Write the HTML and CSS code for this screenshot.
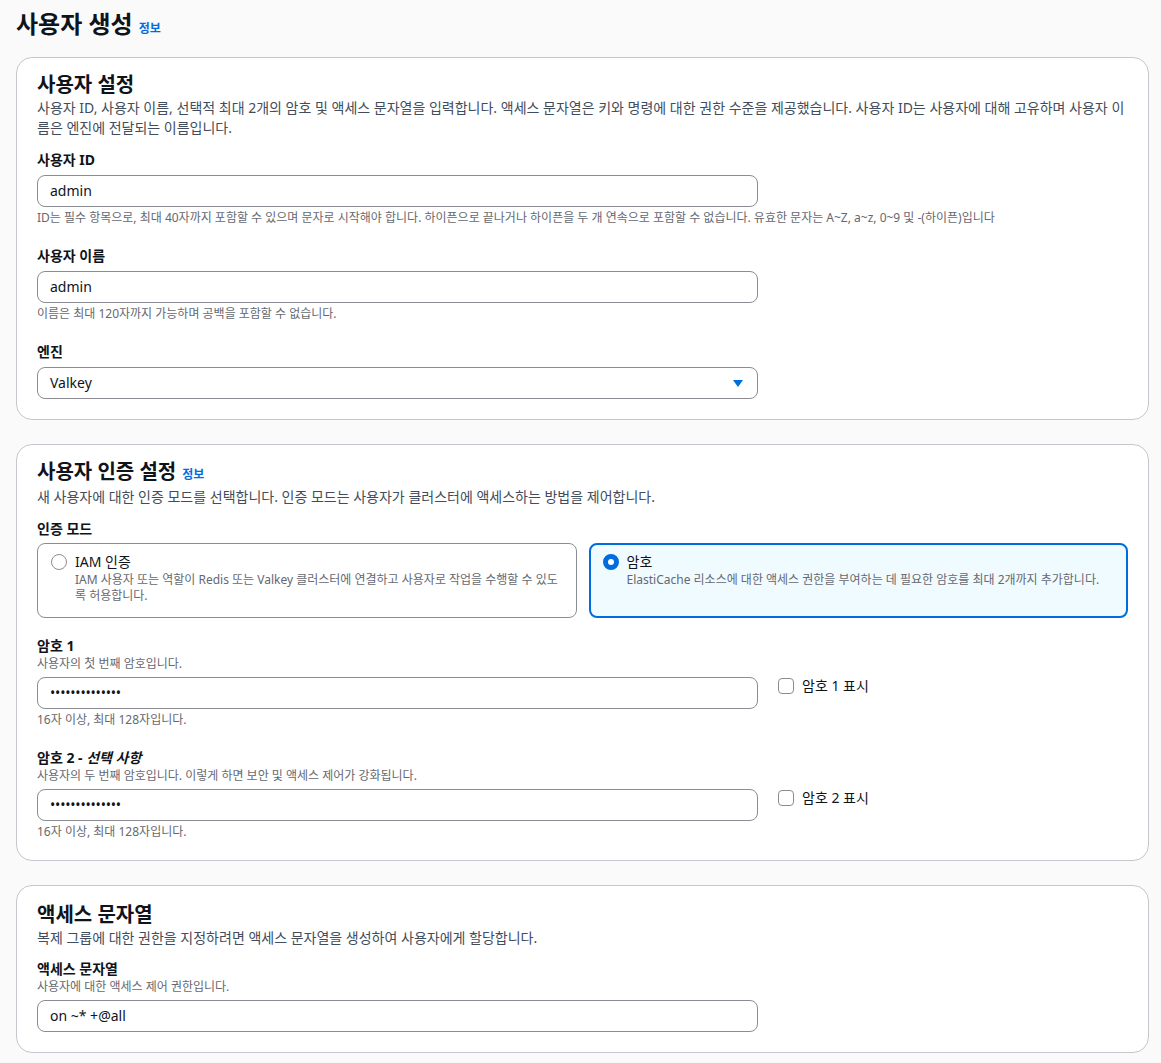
FILE: index.html
```html
<!DOCTYPE html>
<html lang="ko">
<head>
<meta charset="utf-8">
<title>사용자 생성</title>
<link rel="stylesheet" href="styles.css">
</head>
<body>
<div class="page">
  <div class="page-header">
    <h1 class="page-title">사용자 생성</h1>
    <a class="info" href="#">정보</a>
  </div>

  <section class="card">
    <h2 class="card-title">사용자 설정</h2>
    <p class="card-desc">사용자 ID, 사용자 이름, 선택적 최대 2개의 암호 및 액세스 문자열을 입력합니다. 액세스 문자열은 키와 명령에 대한 권한 수준을 제공했습니다. 사용자 ID는 사용자에 대해 고유하며 사용자 이름은 엔진에 전달되는 이름입니다.</p>

    <div class="field first">
      <div class="label">사용자 ID</div>
      <div class="input">admin</div>
      <div class="constraint">ID는 필수 항목으로, 최대 40자까지 포함할 수 있으며 문자로 시작해야 합니다. 하이픈으로 끝나거나 하이픈을 두 개 연속으로 포함할 수 없습니다. 유효한 문자는 A~Z, a~z, 0~9 및 -(하이픈)입니다</div>
    </div>

    <div class="field">
      <div class="label">사용자 이름</div>
      <div class="input">admin</div>
      <div class="constraint">이름은 최대 120자까지 가능하며 공백을 포함할 수 없습니다.</div>
    </div>

    <div class="field">
      <div class="label">엔진</div>
      <div class="input select">
        <span>Valkey</span>
        <svg class="caret" width="10" height="7" viewBox="0 0 10 7"><path d="M0 0 H10 L5 7 Z" fill="#006ce0"/></svg>
      </div>
    </div>
  </section>

  <section class="card card-auth">
    <div class="title-row">
      <h2 class="card-title">사용자 인증 설정</h2>
      <a class="info" href="#">정보</a>
    </div>
    <p class="card-desc">새 사용자에 대한 인증 모드를 선택합니다. 인증 모드는 사용자가 클러스터에 액세스하는 방법을 제어합니다.</p>

    <div class="field first">
      <div class="label">인증 모드</div>
      <div class="tiles">
        <div class="tile">
          <span class="radio"></span>
          <div class="tile-body">
            <div class="tile-label">IAM 인증</div>
            <div class="tile-desc">IAM 사용자 또는 역할이 Redis 또는 Valkey 클러스터에 연결하고 사용자로 작업을 수행할 수 있도록 허용합니다.</div>
          </div>
        </div>
        <div class="tile selected">
          <span class="radio checked"></span>
          <div class="tile-body">
            <div class="tile-label">암호</div>
            <div class="tile-desc">ElastiCache 리소스에 대한 액세스 권한을 부여하는 데 필요한 암호를 최대 2개까지 추가합니다.</div>
          </div>
        </div>
      </div>
    </div>

    <div class="field after-tiles">
      <div class="label">암호 1</div>
      <div class="desc">사용자의 첫 번째 암호입니다.</div>
      <div class="input-row">
        <div class="input password">••••••••••••••</div>
        <label class="check"><span class="box"></span>암호 1 표시</label>
      </div>
      <div class="constraint">16자 이상, 최대 128자입니다.</div>
    </div>

    <div class="field">
      <div class="label">암호 2 - <i>선택 사항</i></div>
      <div class="desc">사용자의 두 번째 암호입니다. 이렇게 하면 보안 및 액세스 제어가 강화됩니다.</div>
      <div class="input-row">
        <div class="input password">••••••••••••••</div>
        <label class="check"><span class="box"></span>암호 2 표시</label>
      </div>
      <div class="constraint">16자 이상, 최대 128자입니다.</div>
    </div>
  </section>

  <section class="card card-last">
    <h2 class="card-title">액세스 문자열</h2>
    <p class="card-desc">복제 그룹에 대한 권한을 지정하려면 액세스 문자열을 생성하여 사용자에게 할당합니다.</p>
    <div class="field first">
      <div class="label">액세스 문자열</div>
      <div class="desc">사용자에 대한 액세스 제어 권한입니다.</div>
      <div class="input">on ~* +@all</div>
    </div>
  </section>
</div>
</body>
</html>
```

FILE: styles.css
```css
* { box-sizing: border-box; }

body {
  margin: 0;
  background: #fafafa;
  color: #0f141a;
  font-family: "Noto Sans", "Noto Sans CJK KR", sans-serif;
  font-size: 14px;
  line-height: 20px;
}

.page {
  width: 1149px;
  padding: 9px 0 10px 16px;
}

.page-header {
  display: flex;
  align-items: baseline;
  gap: 6px;
  height: 48px;
}

.page-title {
  margin: 0;
  font-size: 24px;
  line-height: 30px;
  font-weight: 700;
}

.info {
  color: #006ce0;
  font-size: 12px;
  font-weight: 700;
  text-decoration: none;
}

.card {
  background: #fff;
  border: 1px solid #c6c6cd;
  border-radius: 16px;
  padding: 13px 20px 20px;
  margin-bottom: 24px;
}

.title-row {
  display: flex;
  align-items: baseline;
  gap: 6px;
  margin-top: 2px;
}

.card-title {
  margin: 0;
  font-size: 20px;
  line-height: 24px;
  font-weight: 700;
}

.card > .card-title {
  margin-top: 2px;
}

.card-desc {
  margin: 1px 0 0;
  color: #414d5c;
}

.card-auth .card-desc { margin-top: 2px; }

.card-last { padding-top: 14px; }
.card-last > .card-title { margin-top: 3px; }
.card-last .field.first { margin-top: 11px; }

.field { margin-top: 20px; }
.field.first { margin-top: 12px; }
.field.after-tiles { margin-top: 18px; }

.label {
  font-weight: 700;
  line-height: 20px;
}

.label i { font-weight: 700; }

.desc {
  font-size: 12px;
  line-height: 16px;
  color: #656871;
}

.input {
  margin-top: 5px;
  width: 721px;
  height: 32px;
  border: 1px solid #8c8c94;
  border-radius: 8px;
  padding: 0 12px;
  display: flex;
  align-items: center;
  background: #fff;
}

.select {
  justify-content: space-between;
  padding-right: 14px;
}

.password {
  font-size: 14px;
  letter-spacing: -0.2px;
}

.constraint {
  margin-top: 3px;
  font-size: 12px;
  line-height: 16px;
  color: #656871;
}

.input-row {
  display: flex;
  align-items: flex-start;
  gap: 20px;
}

.check {
  margin-top: 4px;
  display: flex;
  align-items: center;
  gap: 8px;
  height: 20px;
}

.box {
  width: 16px;
  height: 16px;
  border: 1px solid #8c8c94;
  border-radius: 4px;
  background: #fff;
}

.tiles {
  margin-top: 4px;
  display: grid;
  grid-template-columns: 1fr 1fr;
  gap: 12px;
}

.tile {
  display: flex;
  align-items: flex-start;
  gap: 8px;
  border: 1px solid #8c8c94;
  border-radius: 8px;
  padding: 8px 14px 13px 13px;
  min-height: 74px;
}

.tile.selected {
  border: 2px solid #006ce0;
  background: #f0fbff;
  padding: 7px 13px 12px 12px;
}

.radio {
  flex: none;
  width: 16px;
  height: 16px;
  margin-top: 2px;
  border: 1px solid #8c8c94;
  border-radius: 50%;
  background: #fff;
}

.radio.checked {
  border: 5px solid #006ce0;
}

.tile-label { line-height: 20px; }

.tile-desc {
  font-size: 12px;
  line-height: 16px;
  color: #656871;
}
```
